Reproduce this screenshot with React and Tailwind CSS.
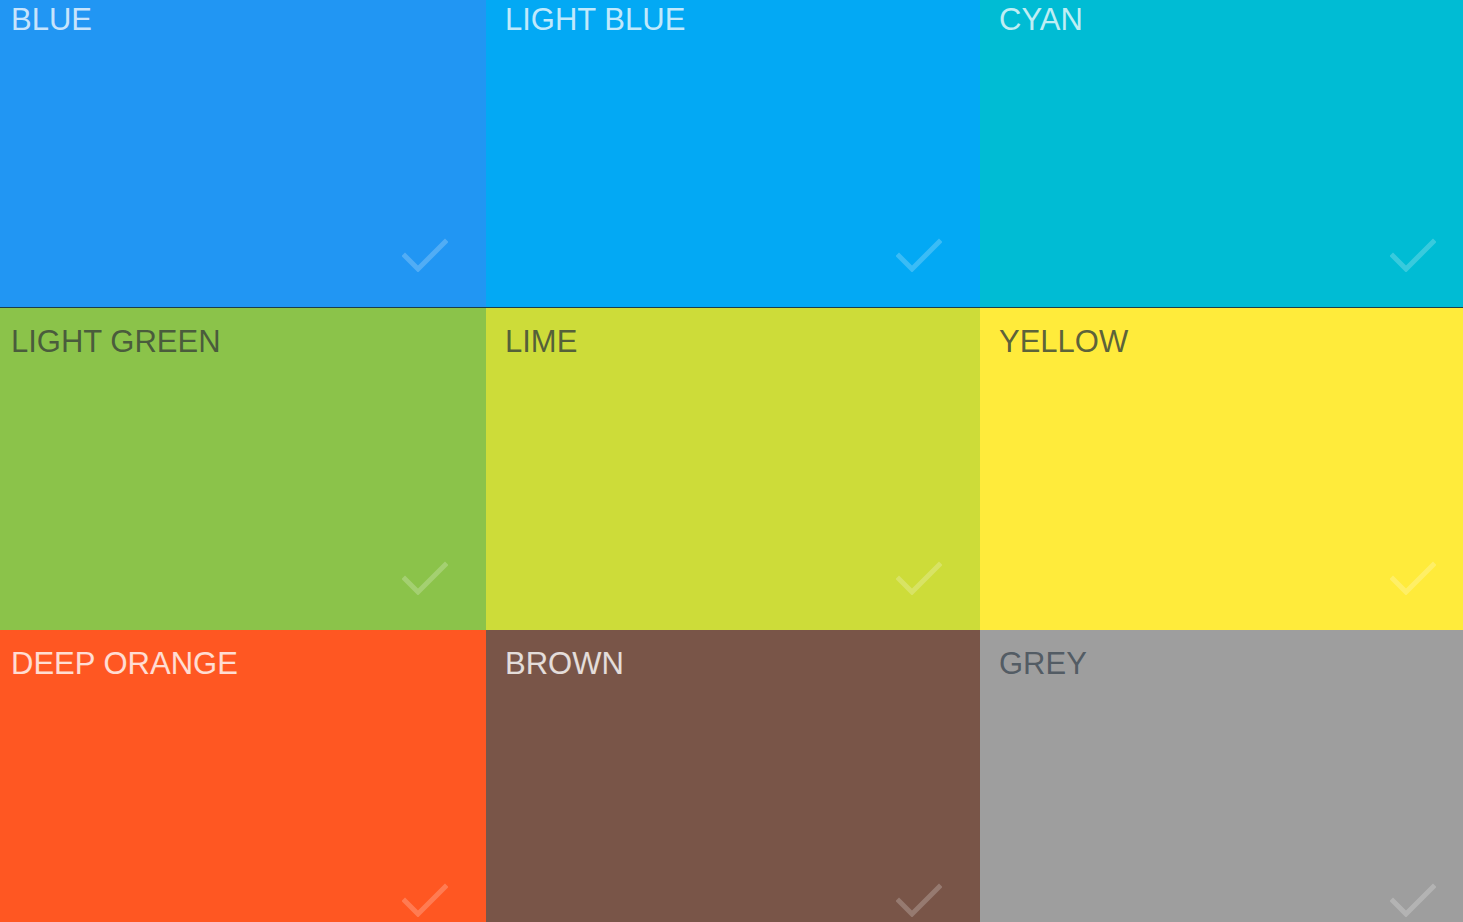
import React from "react";

const colors = [
  { name: "BLUE", bg: "bg-[#2196f3]", text: "text-white/75" },
  { name: "LIGHT BLUE", bg: "bg-[#03a9f4]", text: "text-white/75" },
  { name: "CYAN", bg: "bg-[#00bcd4]", text: "text-white/75" },
  { name: "LIGHT GREEN", bg: "bg-[#8bc34a]", text: "text-[#3f4a3a]/85" },
  { name: "LIME", bg: "bg-[#cddc39]", text: "text-[#3f4a3a]/85" },
  { name: "YELLOW", bg: "bg-[#ffeb3b]", text: "text-[#3f4a3a]/85" },
  { name: "DEEP ORANGE", bg: "bg-[#ff5722]", text: "text-white/80" },
  { name: "BROWN", bg: "bg-[#795548]", text: "text-white/80" },
  { name: "GREY", bg: "bg-[#9e9e9e]", text: "text-[#3f4a55]/80" },
];

function Check() {
  return (
    <svg width="46" height="34" viewBox="0 0 46 34" fill="none">
      <path
        d="M3 18 L16 31 L43 4"
        stroke="white"
        strokeOpacity="0.22"
        strokeWidth="5"
        strokeLinecap="square"
      />
    </svg>
  );
}

export default function App() {
  return (
    <div className="h-[922px] w-full overflow-hidden bg-[#2196f3]" style={{ fontFamily: '"Liberation Sans", Arial, sans-serif' }}>
      <div className="-ml-[8px] -mt-[14px] grid grid-cols-[repeat(3,494px)] auto-rows-[322px]">
        {colors.map((c, i) => (
          <div
            key={c.name}
            className={`${c.bg} flex flex-col pl-[19px] pt-[16px] pr-[38px] pb-[35px] ${i < 3 ? "border-b border-[#1c3f4c]" : ""}`}
          >
            <div className={`text-[31px] leading-[35px] ${c.text}`}>{c.name}</div>
            <div className="mt-auto self-end">
              <Check />
            </div>
          </div>
        ))}
      </div>
    </div>
  );
}
